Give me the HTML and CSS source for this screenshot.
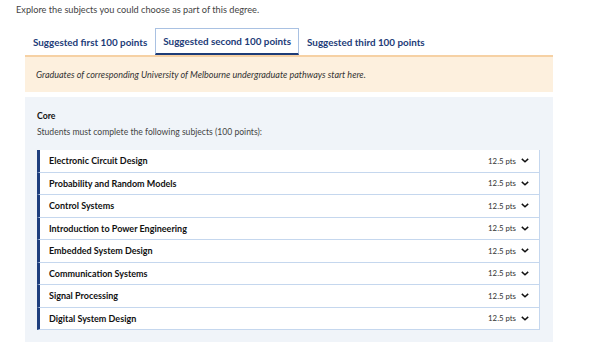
FILE: index.html
```html
<!DOCTYPE html>
<html>
<head>
<meta charset="utf-8">
<link rel="stylesheet" href="styles.css">
</head>
<body>
<p class="intro">Explore the subjects you could choose as part of this degree.</p>
<div class="wrap">
  <div class="tabs">
    <div class="tab">Suggested first 100 points</div>
    <div class="tab active">Suggested second 100 points</div>
    <div class="tab">Suggested third 100 points</div>
  </div>
  <div class="callout">Graduates of corresponding University of Melbourne undergraduate pathways start here.</div>
  <div class="panel">
    <div class="core-title">Core</div>
    <div class="core-desc">Students must complete the following subjects (100 points):</div>
    <ul class="subjects">
      <li class="subject"><span class="name">Electronic Circuit Design</span><span class="pts">12.5 pts</span><svg class="chev" viewBox="0 0 10 6"><path d="M1 1l4 3.6L9 1"/></svg></li>
      <li class="subject"><span class="name">Probability and Random Models</span><span class="pts">12.5 pts</span><svg class="chev" viewBox="0 0 10 6"><path d="M1 1l4 3.6L9 1"/></svg></li>
      <li class="subject"><span class="name">Control Systems</span><span class="pts">12.5 pts</span><svg class="chev" viewBox="0 0 10 6"><path d="M1 1l4 3.6L9 1"/></svg></li>
      <li class="subject"><span class="name">Introduction to Power Engineering</span><span class="pts">12.5 pts</span><svg class="chev" viewBox="0 0 10 6"><path d="M1 1l4 3.6L9 1"/></svg></li>
      <li class="subject"><span class="name">Embedded System Design</span><span class="pts">12.5 pts</span><svg class="chev" viewBox="0 0 10 6"><path d="M1 1l4 3.6L9 1"/></svg></li>
      <li class="subject"><span class="name">Communication Systems</span><span class="pts">12.5 pts</span><svg class="chev" viewBox="0 0 10 6"><path d="M1 1l4 3.6L9 1"/></svg></li>
      <li class="subject"><span class="name">Signal Processing</span><span class="pts">12.5 pts</span><svg class="chev" viewBox="0 0 10 6"><path d="M1 1l4 3.6L9 1"/></svg></li>
      <li class="subject"><span class="name">Digital System Design</span><span class="pts">12.5 pts</span><svg class="chev" viewBox="0 0 10 6"><path d="M1 1l4 3.6L9 1"/></svg></li>
    </ul>
  </div>
</div>
</body>
</html>
```
FILE: styles.css
```css
* { box-sizing: border-box; }
body {
  margin: 0;
  font-family: "Lato", "Noto Sans", sans-serif;
  color: #333;
  background: #fff;
}
.intro {
  margin: 0;
  padding: 4px 16px 0;
  font-size: 9.2px;
  line-height: 12px;
  color: #444;
}
.wrap {
  width: 528px;
  margin: 12px 0 0 25px;
}
.tabs {
  display: flex;
  height: 29px;
  border-bottom: 2px solid #f6d1a4;
}
.tab {
  padding: 0 7px;
  height: 27px;
  display: flex;
  align-items: center;
  font-size: 9.85px;
  font-weight: 700;
  color: #1d3c78;
  border: 1px solid transparent;
  border-bottom: none;
}
.tab.active {
  border-color: #a9c1e2;
  border-bottom: 2px solid #1d3c78;
  background: #fff;
}
.callout {
  background: #fdf0de;
  height: 35px;
  padding: 0 11px;
  display: flex;
  align-items: center;
  font-size: 9px;
  font-style: italic;
  color: #333;
}
.panel {
  margin-top: 5px;
  background: #f0f4f9;
  padding: 13px 13px 12px 12px;
}
.core-title {
  font-size: 8.7px;
  font-weight: 700;
  color: #111;
  line-height: 12px;
}
.core-desc {
  font-size: 8.6px;
  color: #444;
  line-height: 12px;
  margin-top: 4px;
}
.subjects {
  list-style: none;
  margin: 12px 0 0;
  padding: 0;
  width: 503px;
}
.subject {
  display: flex;
  align-items: center;
  height: 22.5px;
  background: #fff;
  border-left: 3px solid #1f3f7e;
  border-right: 1px solid #c5d7ee;
  border-bottom: 1px solid #c5d7ee;
  padding: 0 10px 0 9px;
}
.name {
  flex: 1;
  font-size: 9px;
  font-weight: 700;
  color: #111;
}
.pts {
  font-size: 7.8px;
  color: #333;
  margin-right: 5px;
}
.chev {
  width: 8px;
  height: 5px;
  fill: none;
  stroke: #111;
  stroke-width: 1.8;
}
```
